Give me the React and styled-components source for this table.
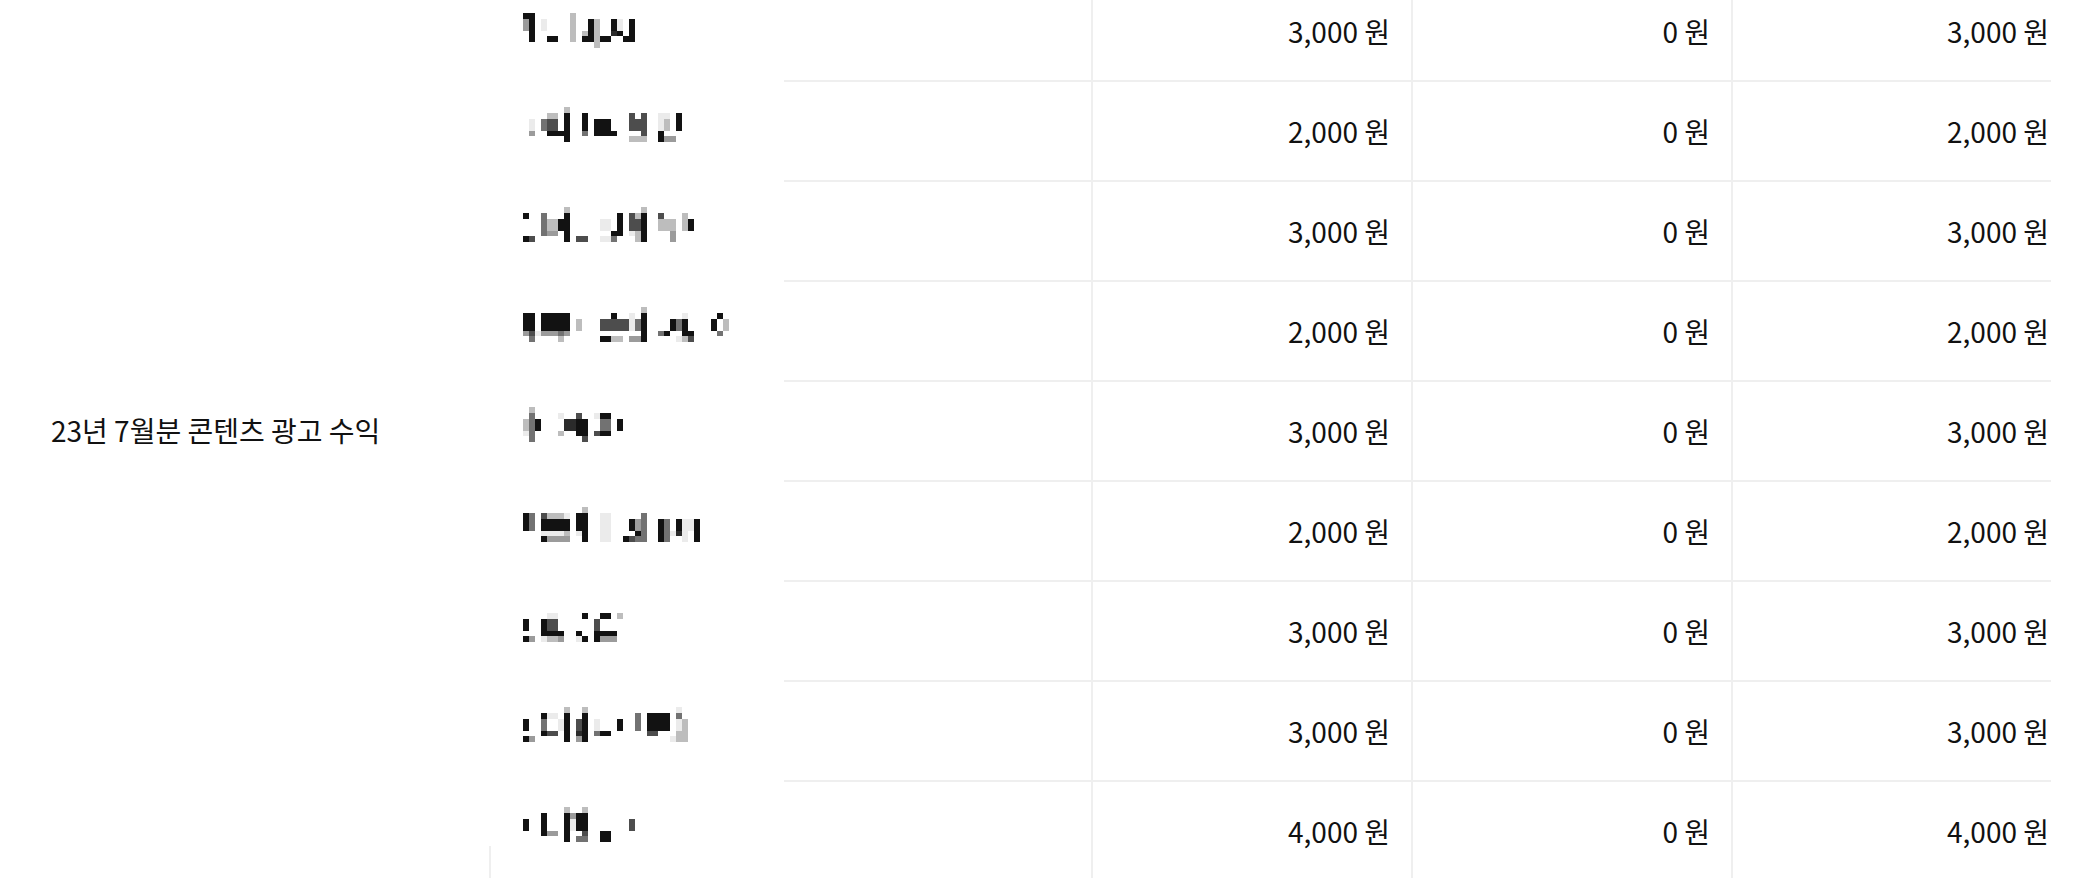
import React from "react";
import styled, { createGlobalStyle } from "styled-components";

const LINE = "#efefef";
const CELL = 5.89;

const GlobalStyle = createGlobalStyle`
  html, body {
    margin: 0;
    padding: 0;
    background: #ffffff;
    overflow: hidden;
  }
  body {
    font-family: "Noto Sans CJK KR", "Noto Sans", sans-serif;
    color: #111111;
  }
`;

const Page = styled.div`
  width: 2082px;
  height: 878px;
  overflow: hidden;
  background: #ffffff;
`;

const Sheet = styled.div`
  display: flex;
  width: 2051px;
  overflow: hidden;
  margin-top: -18px;
`;

const GroupCell = styled.div`
  flex: none;
  width: 491px;
  box-sizing: border-box;
  display: flex;
  align-items: center;
  padding-left: 51px;
  padding-bottom: 5px;
  font-size: 28px;
  color: #111111;
  background-image: linear-gradient(${LINE}, ${LINE});
  background-repeat: no-repeat;
  background-position: right bottom;
  background-size: 2px 36px;
`;

const Rows = styled.div`
  display: flex;
  flex-direction: column;
  flex: none;
`;

const Row = styled.div`
  display: grid;
  grid-template-columns: 293px 307px 320px 320px 339px;
  height: 100px;
`;

const NameCell = styled.div`
  box-sizing: border-box;
  padding: 25px 0 0 32px;
`;

const MemoCell = styled.div`
  border-bottom: 2px solid ${LINE};
`;

const AmountCell = styled.div`
  box-sizing: border-box;
  display: flex;
  align-items: center;
  justify-content: flex-end;
  padding-right: 21px;
  padding-bottom: 1px;
  border-left: 2px solid ${LINE};
  border-bottom: 2px solid ${LINE};
  font-size: 28px;
  color: #111111;
  white-space: nowrap;
`;

const MosaicSvg = styled.svg`
  display: block;
`;

const SHADES = {
  a: "#ebebeb",
  b: "#bdbdbd",
  c: "#9b9b9b",
  d: "#727272",
  e: "#4d4d4d",
  f: "#2b2b2b",
  k: "#121212",
};

const NAMES = [
  [
    "...................",
    "kk......b..........",
    "ck.a....b..kb..ka.k",
    "ck.a....b..kb..ka.k",
    ".k......b.bkb..fk.k",
    ".k..kk..b.kkbkk..kk",
    "............b......",
  ],
  [
    ".......b...................",
    "....bb.k..k.......e.e..aa.k",
    ".a.dee.k..k.kkk...eee..ab.k",
    ".a.dee.k..k.kkk...eee..ab.k",
    ".c..kkkk..d.kkkk....e..k...",
    ".......k..........bbb..kcc.",
    "...........................",
  ],
  [
    ".......b............b........",
    "k..d...k........k.ebk..e...b.",
    "...dbbkk.....aa.k.eek..bbb.bk",
    "...dbbkk.....aa.k.eek..bbb.bk",
    "...dcc.k.......kk.abk....c...",
    "ke.....k.ee..aad...bk....c...",
    ".............................",
  ],
  [
    "....................b..............",
    "kk.kkkkk.......k..a.k......a.....k.",
    "kk.kkkkk.b...eeeeeadk....kdk....k.b",
    "kk.kkkkk.b...eeeeeadk....kdk....k.b",
    "ceacccdc............k..dk..kk....d.",
    ".d....b......kkbb.cck.....abe......",
    "...................................",
  ],
  [
    ".b...............",
    ".d....a..e..akk..",
    "bdk....ffkk..dd.k",
    "bdk....ffkk..dd.k",
    "ad....b..kk.ekk..",
    ".d........e......",
    ".................",
  ],
  [
    "..........b...................",
    "kd.ebbba.kk..aa.....d.........",
    "kd.kkkkk.kk..aa...kcd..kd.kaak",
    "kd.kkkkk.kk..aa...kcd..kd.kaak",
    "...aaaab.ak..aa....kd..kdafa.k",
    "...kcccc..k..aa..kedd..kd..a.k",
    "..............................",
  ],
  [
    ".................",
    "....aa....k..kk.b",
    "k..kee......e....",
    "k..kee......e....",
    "...kkkk..k..kkkk.",
    "kc.abbc..ak.kccc.",
    ".................",
  ],
  [
    ".......b..b...............a.",
    "...kaa.k..k........d.kkkk.d.",
    "k..d..ak.ek.a...k..d.kkkk.ab",
    "k..d..ak.ek.a...k..d.kkkk.ab",
    "...kee.k.fk.dkk......ee...bb",
    "kc.....k.ck..............abb",
    "............................",
  ],
  [
    ".......b..b........",
    "...k...kckk........",
    "k..k...kakk.......e",
    "k..k...kakk.......e",
    "...kcc.k..e..kk....",
    ".......k.dd..kk....",
    "...................",
  ],
];

const AMOUNTS = [3000, 2000, 3000, 2000, 3000, 2000, 3000, 3000, 4000];

function Mosaic({ grid }) {
  const cols = grid[0].length;
  const rows = grid.length;
  const rects = [];
  grid.forEach((line, y) => {
    let x = 0;
    while (x < line.length) {
      const ch = line[x];
      if (ch === ".") {
        x += 1;
        continue;
      }
      let end = x + 1;
      while (end < line.length && line[end] === ch) end += 1;
      rects.push(
        <rect
          key={`${y}-${x}`}
          x={x}
          y={y}
          width={end - x}
          height={1}
          fill={SHADES[ch]}
        />
      );
      x = end;
    }
  });
  return (
    <MosaicSvg
      width={cols * CELL}
      height={rows * CELL}
      viewBox={`0 0 ${cols} ${rows}`}
      shapeRendering="crispEdges"
      aria-hidden="true"
    >
      {rects}
    </MosaicSvg>
  );
}

const won = (n) => `${n.toLocaleString("en-US")} 원`;

export default function App() {
  return (
    <Page>
      <GlobalStyle />
      <Sheet>
        <GroupCell>23년 7월분 콘텐츠 광고 수익</GroupCell>
        <Rows>
          {NAMES.map((grid, i) => (
            <Row key={i}>
              <NameCell>
                <Mosaic grid={grid} />
              </NameCell>
              <MemoCell />
              <AmountCell>{won(AMOUNTS[i])}</AmountCell>
              <AmountCell>{won(0)}</AmountCell>
              <AmountCell>{won(AMOUNTS[i])}</AmountCell>
            </Row>
          ))}
        </Rows>
      </Sheet>
    </Page>
  );
}
